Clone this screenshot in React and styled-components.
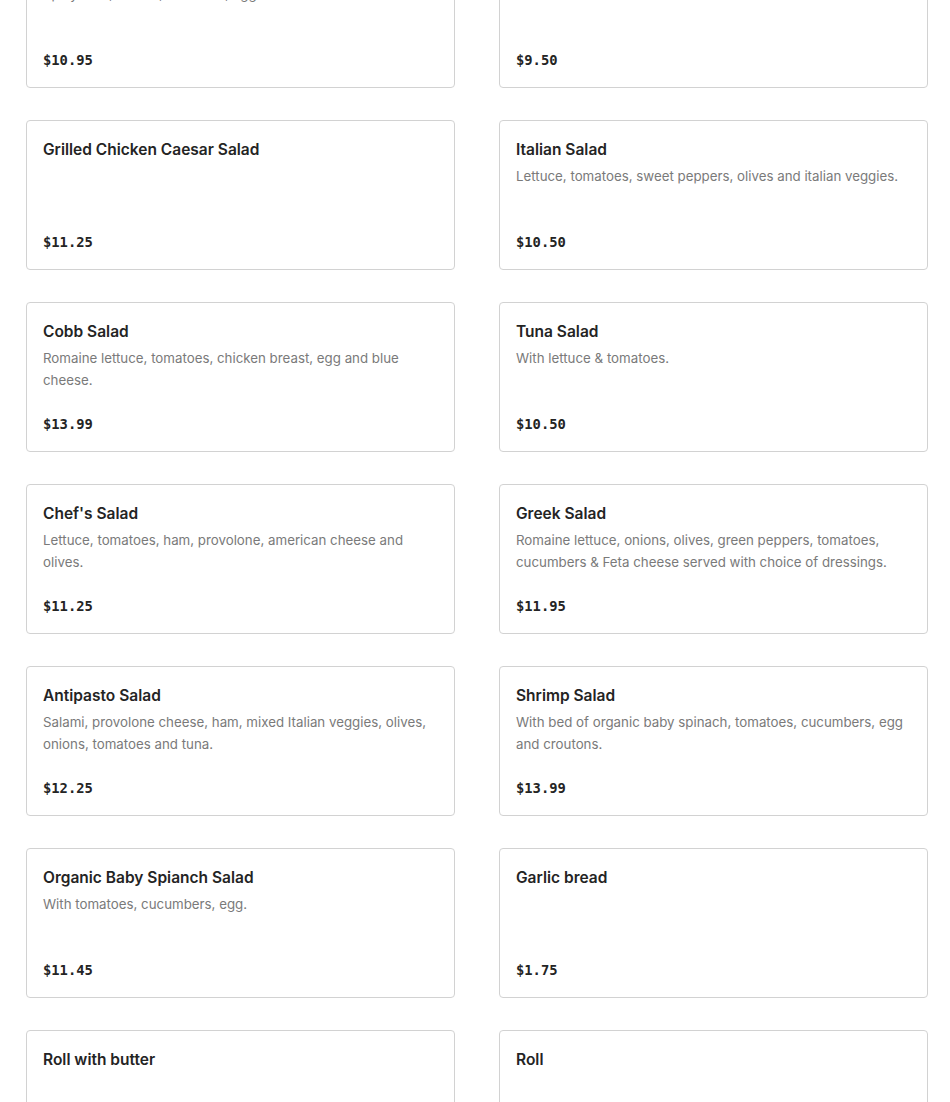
import React from 'react';
import styled, { createGlobalStyle } from 'styled-components';

const items = [
  { name: 'Tuna Wrap', desc: 'Spicy tuna, lettuce, tomatoes, egg.', price: '$10.95' },
  { name: 'Chicken Salad', desc: '', price: '$9.50' },
  { name: 'Grilled Chicken Caesar Salad', desc: '', price: '$11.25' },
  { name: 'Italian Salad', desc: 'Lettuce, tomatoes, sweet peppers, olives and italian veggies.', price: '$10.50' },
  { name: 'Cobb Salad', desc: 'Romaine lettuce, tomatoes, chicken breast, egg and blue cheese.', price: '$13.99' },
  { name: 'Tuna Salad', desc: 'With lettuce & tomatoes.', price: '$10.50' },
  { name: "Chef's Salad", desc: 'Lettuce, tomatoes, ham, provolone, american cheese and olives.', price: '$11.25' },
  { name: 'Greek Salad', desc: 'Romaine lettuce, onions, olives, green peppers, tomatoes, cucumbers & Feta cheese served with choice of dressings.', price: '$11.95' },
  { name: 'Antipasto Salad', desc: 'Salami, provolone cheese, ham, mixed Italian veggies, olives, onions, tomatoes and tuna.', price: '$12.25' },
  { name: 'Shrimp Salad', desc: 'With bed of organic baby spinach, tomatoes, cucumbers, egg and croutons.', price: '$13.99' },
  { name: 'Organic Baby Spianch Salad', desc: 'With tomatoes, cucumbers, egg.', price: '$11.45' },
  { name: 'Garlic bread', desc: '', price: '$1.75' },
  { name: 'Roll with butter', desc: '', price: '$1.50' },
  { name: 'Roll', desc: '', price: '$1.00' },
];

function App() {
  return (
    <>
      <GlobalStyle />
      <MenuGrid>
        {items.map((item) => (
          <Card key={item.name}>
            <Title>{item.name}</Title>
            {item.desc && <Desc>{item.desc}</Desc>}
            <Price>{item.price}</Price>
          </Card>
        ))}
      </MenuGrid>
    </>
  );
}

const GlobalStyle = createGlobalStyle`
  body {
    margin: 0;
    background: #fff;
    font-family: "Inter", "Liberation Sans", sans-serif;
    overflow: hidden;
  }
`;

// list is scrolled: first row sits partly above the viewport
const MenuGrid = styled.div`
  display: grid;
  grid-template-columns: 429px 429px;
  column-gap: 44px;
  row-gap: 32px;
  padding: 0 22px 32px 26px;
  margin-top: -62px;
`;

const Card = styled.div`
  box-sizing: border-box;
  height: 150px;
  display: flex;
  flex-direction: column;
  padding: 17px 16px 17px 16px;
  border: 1px solid #d2d2d2;
  border-radius: 4px;
  background: #fff;
`;

const Title = styled.div`
  font-size: 15.5px;
  line-height: 24px;
  font-weight: 600;
  color: #242424;
  margin-bottom: 3px;
`;

const Desc = styled.div`
  font-size: 13.3px;
  line-height: 22px;
  color: #7a7a7a;
`;

const Price = styled.div`
  margin-top: auto;
  font-family: "DejaVu Sans Mono", "Liberation Mono", monospace;
  font-size: 13.8px;
  font-weight: 700;
  line-height: 20px;
  color: #242424;
`;

export default App;
